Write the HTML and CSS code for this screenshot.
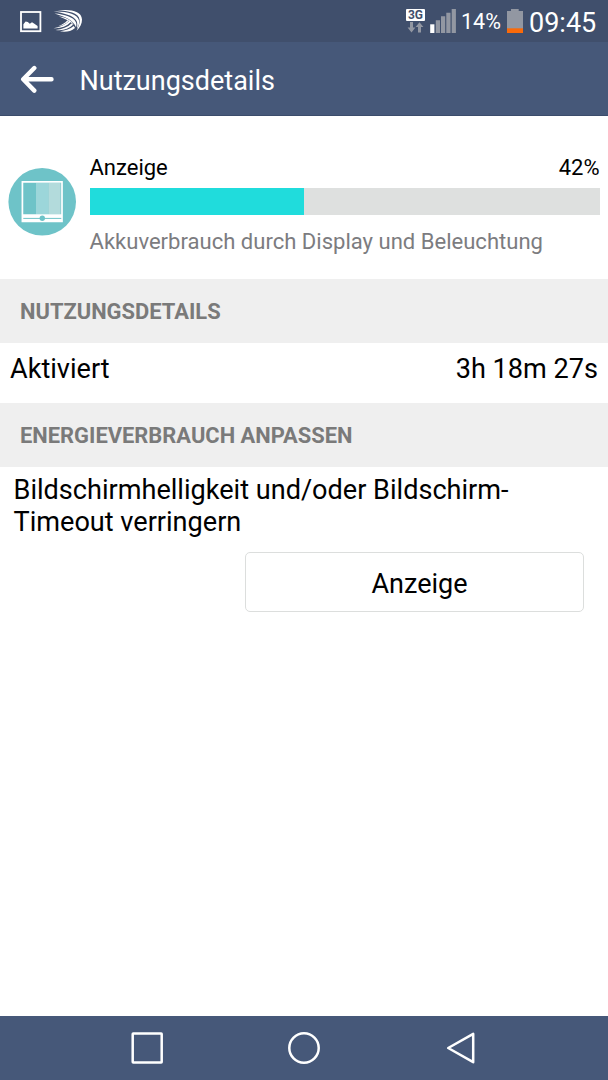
FILE: index.html
```html
<!DOCTYPE html>
<html lang="de">
<head>
  <meta charset="UTF-8">
  <title>Nutzungsdetails</title>
  <link rel="stylesheet" href="styles.css">
</head>
<body>
  <div class="screen">
    <div class="statusbar">
      <svg class="notifications" width="70" height="42" viewBox="0 0 70 42">
        <rect x="1" y="12" width="19.400" height="19.200" fill="none" stroke="#fff" stroke-width="1.8"/>
        <path d="M3.400 28.500v-4.200l2.200-2.800 2.200.6 2 1.700 2.200-1.500 2 1.200 3.600 2.400v2.600z" fill="#fff"/>
        <g fill="#fff">
          <path d="M37.500 10.600C49 8.800 61.800 10.500 62 19.500c.1 4.300-2 8-5.400 11.300 2-4 3.400-7.500 3-11C58.800 12.600 48 11 37.500 10.600z"/>
          <path d="M33.500 11.500C46 11 57.800 13.800 59 20.500c.5 3-.4 5.700-2 8.300.3-3 .6-5.500-.4-7.800C53.500 15.200 43.500 13 33.500 11.500z"/>
          <path d="M34.500 13.500c9.500.6 19.500 3.500 21.500 9 .6 1.800.5 3.300 0 4.800C53.500 20 44.500 16.500 34.500 13.500z"/>
          <path d="M38.500 16.200c6.500.8 13 3.600 15.500 8.600-3.500-3.300-8.500-6.200-15.500-8.600z"/>
          <path d="M33.500 28.200c6-.9 11.800-3.300 16-7.400l1.300 1.300c-4.500 4.600-10.800 6.700-17.300 6.100z"/>
          <path d="M35.500 29.900c6.700-.5 12.200-2.600 16.200-6.600l1.300 1.500c-4.300 4.300-10.500 6.200-17.500 5.100z"/>
          <path d="M40 31.300c5.500-.5 10.200-2.100 13.800-5.200l1.200 1.800c-4 3.400-9.500 4.600-15 3.400z"/>
          <path d="M38 26.200c3.800-1.200 7-3.200 9.500-6l1.200.9c-2.700 3-6.500 4.900-10.700 5.100z"/>
        </g>
      </svg>
      <div class="status-info">
        <div class="network">
          <span class="network-type">3G</span>
          <svg width="18" height="12" viewBox="0 0 18 12">
            <path d="M4 0h3v5.500h2.400L5.500 10.500 1.600 5.500H4zM12 10.500h3V5h2.400L13.500.2 9.600 5H12z" fill="#9297a2"/>
          </svg>
        </div>
        <svg class="signal" width="26" height="24" viewBox="0 0 26 24">
          <path d="M.2 15.300h4.200V24H.2z" fill="#fff"/>
          <path d="M5.800 11.300H10V24H5.800zM11 7.300h4.200V24H11zM16.300 3.800h4.200V24h-4.200zM21.700 0h4.200v24h-4.200z" fill="#9297a2"/>
        </svg>
        <span class="percent">14%</span>
        <svg class="battery" width="16" height="24" viewBox="0 0 16 24">
          <path d="M4 0h7.700v2H16v22H0V2h4z" fill="#9297a2"/>
          <path d="M0 19.300h16V24H0z" fill="#fa6a0a"/>
        </svg>
        <span class="clock">09:45</span>
      </div>
    </div>

    <div class="header">
      <svg width="34" height="28" viewBox="0 0 34 28">
        <path d="M14.300 3 3.200 14.300l11.100 11.300M4 14.300h27.500" fill="none" stroke="#fff" stroke-width="4.400" stroke-linecap="round" stroke-linejoin="round"/>
      </svg>
      <h1>Nutzungsdetails</h1>
    </div>

    <div class="summary">
      <svg class="summary-icon" width="68" height="68" viewBox="0 0 68 68">
        <circle cx="34.200" cy="33.800" r="33.800" fill="#6ec3c8"/>
        <path d="M14.400 13.800h39.600v39.600H14.400z" fill="#6ec3c8" stroke="#fff" stroke-width="1.700"/>
        <path d="M28 15h12.400v31.500H28z" fill="#9cd6da"/>
        <path d="M40.400 15h12.200v31.500H40.400z" fill="#b3dbdc"/>
        <path d="M14.400 46.300h39.600v7.100H14.400z" fill="#fff"/>
        <path d="M15.300 50.400h38" stroke="#6ec3c8"/>
        <circle cx="34.300" cy="50.200" r="2.700" fill="#6ec3c8"/>
      </svg>
      <div class="usage">
        <div class="usage-title"><span>Anzeige</span><span>42%</span></div>
        <div class="bar"><div class="bar-fill" style="width: 42%"></div></div>
        <p>Akkuverbrauch durch Display und Beleuchtung</p>
      </div>
    </div>

    <h2>NUTZUNGSDETAILS</h2>
    <div class="row"><span>Aktiviert</span><span>3h 18m 27s</span></div>

    <h2>ENERGIEVERBRAUCH ANPASSEN</h2>
    <div class="adjust">
      <p>Bildschirmhelligkeit und/oder Bildschirm-<br>Timeout verringern</p>
      <button>Anzeige</button>
    </div>

    <div class="navbar">
      <svg width="34" height="34" viewBox="0 0 34 34"><rect x="2.700" y="2.500" width="29" height="29" rx=".5"/></svg>
      <svg width="34" height="34" viewBox="0 0 34 34"><circle cx="17" cy="17" r="14.700"/></svg>
      <svg width="34" height="34" viewBox="0 0 34 34"><path d="M29.200 2.800v28.400L4.200 17z"/></svg>
    </div>
  </div>
</body>
</html>
```

FILE: styles.css
```css
* { box-sizing: border-box; }
body { margin: 0; font-family: Roboto, sans-serif; background: #fff; color: #000; }
h1, h2, p { margin: 0; font-weight: normal; }
svg { display: block; flex: none; }
.screen { display: flex; flex-direction: column; width: 608px; height: 1080px; }

.statusbar {
  display: flex; justify-content: space-between; height: 42px;
  padding: 0 12px 0 20px; background: #404f6c; color: #fff;
}
.status-info { display: flex; align-items: flex-start; }
.network { width: 19px; margin: 9px 5px 0 0; }
.network-type {
  display: block; height: 12px; margin-bottom: 1px; border-radius: 1px;
  background: #fff; color: #404f6c; text-align: center;
  font-size: 12px; font-weight: bold; line-height: 12px;
}
.signal { margin-top: 9px; }
.percent { width: 46px; margin: 8px 0 0 5px; font-size: 21.5px; line-height: 28px; }
.battery { margin-top: 9px; }
.clock { width: 67px; margin: 5px 0 0 6px; font-size: 27px; line-height: 36px; }

.header {
  display: flex; align-items: center; gap: 25.5px; height: 74px;
  padding: 0 20px; background: #465879; color: #fff;
  border-bottom: 1px solid #3b4c6b;
}
.header h1 { font-size: 27px; line-height: 36px; padding-top: 5px; }

.summary { display: flex; height: 162.5px; padding: 38px 8.5px 0 8px; gap: 13.5px; }
.summary-icon { margin-top: 14px; }
.usage { flex: 1; }
.usage-title {
  display: flex; justify-content: space-between;
  font-size: 22px; line-height: 28px;
}
.bar { height: 27px; margin-top: 6px; background: #dee0df; }
.bar-fill { height: 27px; background: #20dcdc; }
.usage p { margin-top: 13px; font-size: 22.05px; line-height: 28px; color: #7c7c80; }

h2 {
  height: 64px; padding: 1px 20px 0; background: #efefef; color: #7a7a7a;
  font-size: 21.9px; font-weight: bold; line-height: 64px;
}
.row {
  display: flex; justify-content: space-between; height: 60px;
  padding: 8px 10px; font-size: 27.1px; line-height: 36px;
}
.adjust {
  display: flex; flex: 1; flex-direction: column; align-items: flex-end;
  padding: 8.5px 24px 0 13.5px; font-size: 27.1px; line-height: 31.5px;
}
.adjust p { align-self: flex-start; white-space: nowrap; }
.adjust button {
  width: 339px; height: 60px; margin-top: 14px; padding: 3px 0 0 10px;
  background: #fff; border: 1.5px solid #dcdedd; border-radius: 5px;
  font: 27px Roboto, sans-serif; color: #000;
}

.navbar {
  display: flex; justify-content: space-between; align-items: center;
  height: 64px; padding: 0 130px; background: #465879;
}
.navbar svg { fill: none; stroke: #fff; stroke-width: 2.5; stroke-linejoin: round; }
```
